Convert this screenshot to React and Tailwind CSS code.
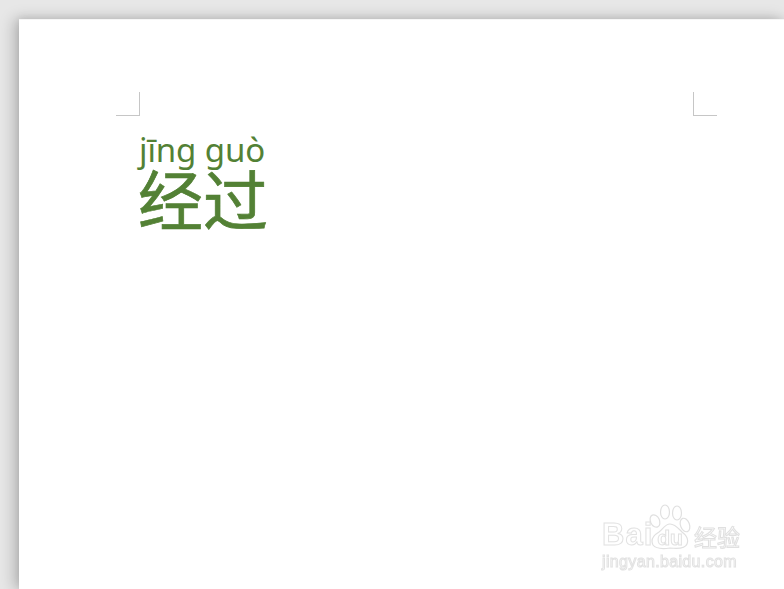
export default function App() {
  const mark = "w-[24px] h-[24px] border-[#c6c6c6]";
  const stroke = "[-webkit-text-stroke:1px_#e2e2e2] text-white [font-family:'Liberation_Sans',sans-serif]";
  return (
    <div className="relative w-[784px] h-[589px] overflow-hidden bg-[#e7e7e7] pt-[19px] pl-[19px]">
      <div className="h-[570px] w-[765px] bg-white shadow-[-5px_0_14px_rgba(0,0,0,0.22),0_-1px_8px_rgba(0,0,0,0.08)] border-t border-[#f6f6f6] pt-[72px] pl-[97px] pr-[67px]">
        <div className="flex justify-between">
          <div className={mark + " border-r border-b"} />
          <div className={mark + " border-l border-b"} />
        </div>
        <div className="pl-[23px] pt-[18px] text-[#538135]">
          <div className="text-[33px] leading-[32px] -tracking-[0.1px] [font-family:'Noto_Sans','Open_Sans',sans-serif]">jīng guò</div>
          <div className="text-[65px] leading-[62px] -ml-px [-webkit-text-stroke:0.7px_#538135] [font-family:'Noto_Sans_CJK_SC',sans-serif]">经过</div>
        </div>
      </div>
      <div className="absolute right-[42px] bottom-[18px] w-[140px] flex flex-col gap-[3px] blur-[0.4px]">
        <div className="flex items-end">
          <div className={"text-[31px] leading-[30px] font-bold tracking-[1px] w-[46px] " + stroke}>Bai</div>
          <div className="relative w-[44px] h-[46px] flex items-end justify-center">
            <svg className="absolute inset-0" width="44" height="46" viewBox="0 0 44 46" fill="#fff" stroke="#e0e0e0" strokeWidth="1.2">
              <ellipse cx="7" cy="17" rx="4.5" ry="6.5" transform="rotate(-25 7 17)" />
              <ellipse cx="17" cy="8" rx="4.5" ry="7" />
              <ellipse cx="29" cy="9" rx="4.5" ry="7" />
              <ellipse cx="37" cy="21" rx="4.5" ry="7" transform="rotate(-20 37 21)" />
              <path d="M22 20c5 0 8 4 12 8 4 3 7 7 5 12-2 5-9 5-17 4-7 1-14 1-17-3-3-6 1-10 6-13 4-3 6-8 11-8z" />
            </svg>
            <div className={"relative text-[21px] leading-[20px] font-bold mb-[2px] " + stroke}>du</div>
          </div>
          <div className="text-[23px] leading-[28px] ml-[2px] text-white [-webkit-text-stroke:1px_#e0e0e0] [font-family:'Noto_Sans_CJK_SC',sans-serif] whitespace-nowrap">经验</div>
        </div>
        <div className={"text-[16px] leading-[18px] whitespace-nowrap tracking-[0.35px] " + stroke}>jingyan.baidu.com</div>
      </div>
    </div>
  );
}
